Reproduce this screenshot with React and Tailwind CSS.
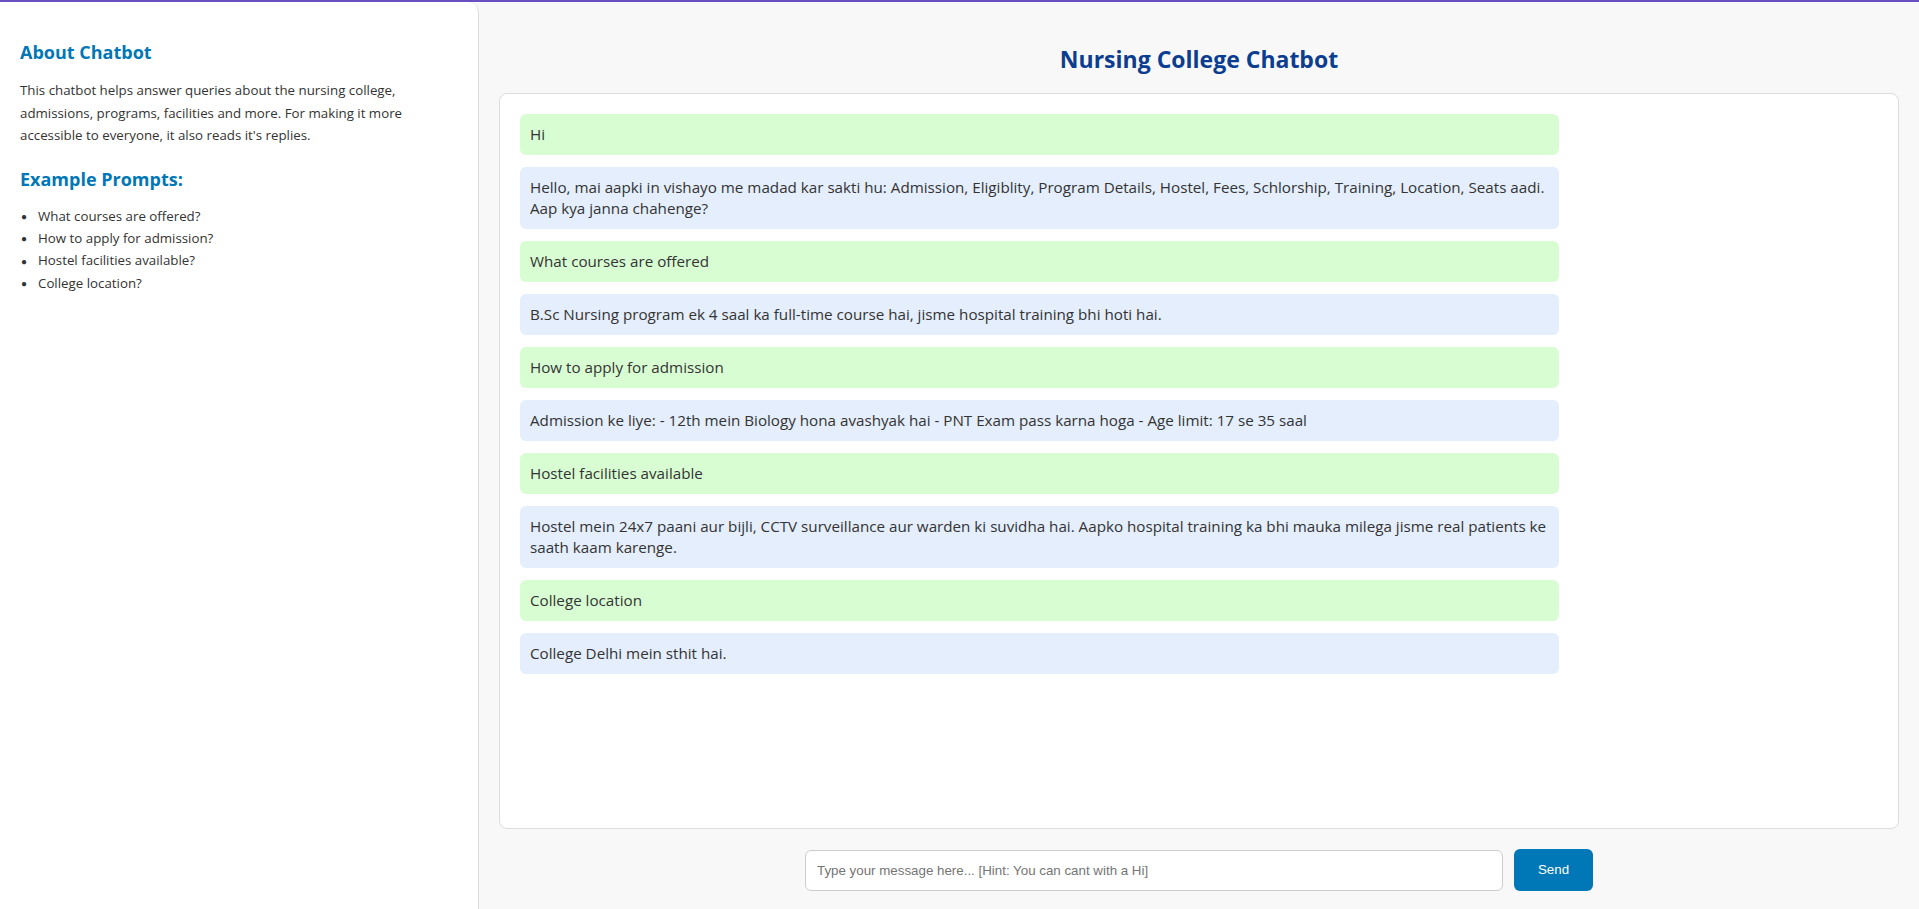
import React, { useState } from 'react';

const messages = [
  { from: 'user', lines: ['Hi'] },
  {
    from: 'bot',
    lines: [
      'Hello, mai aapki in vishayo me madad kar sakti hu: Admission, Eligiblity, Program Details, Hostel, Fees, Schlorship, Training, Location, Seats aadi.',
      'Aap kya janna chahenge?',
    ],
  },
  { from: 'user', lines: ['What courses are offered'] },
  { from: 'bot', lines: ['B.Sc Nursing program ek 4 saal ka full-time course hai, jisme hospital training bhi hoti hai.'] },
  { from: 'user', lines: ['How to apply for admission'] },
  { from: 'bot', lines: ['Admission ke liye: - 12th mein Biology hona avashyak hai - PNT Exam pass karna hoga - Age limit: 17 se 35 saal'] },
  { from: 'user', lines: ['Hostel facilities available'] },
  {
    from: 'bot',
    lines: [
      'Hostel mein 24x7 paani aur bijli, CCTV surveillance aur warden ki suvidha hai. Aapko hospital training ka bhi mauka milega jisme real patients ke',
      'saath kaam karenge.',
    ],
  },
  { from: 'user', lines: ['College location'] },
  { from: 'bot', lines: ['College Delhi mein sthit hai.'] },
];

const prompts = [
  'What courses are offered?',
  'How to apply for admission?',
  'Hostel facilities available?',
  'College location?',
];

function Sidebar() {
  return (
    <aside className="w-[479px] shrink-0 bg-white border-r border-[#dddddd] rounded-tr-[10px] px-5 pt-[37px]">
      <h3 className="text-[18px] leading-[27px] font-bold text-[#0077b6]">About Chatbot</h3>
      <p className="mt-[13px] text-[13.3px] leading-[22.6px] text-[#333333]">
        This chatbot helps answer queries about the nursing college,
        <br />
        admissions, programs, facilities and more. For making it more
        <br />
        accessible to everyone, it also reads it's replies.
      </p>
      <h3 className="mt-[19px] text-[18px] leading-[27px] font-bold text-[#0077b6]">Example Prompts:</h3>
      <ul className="mt-[12px] text-[13.3px] leading-[22.3px] text-[#333333]">
        {prompts.map((p) => (
          <li key={p} className="flex items-center">
            <span className="w-[18px] text-[10px] leading-none pl-[1px]">●</span>
            {p}
          </li>
        ))}
      </ul>
    </aside>
  );
}

function ChatBubble({ msg }) {
  return (
    <div
      className={
        'w-[1039px] rounded-[6px] px-[10px] py-[10px] text-[15.2px] leading-[21px] text-[#333333] whitespace-nowrap ' +
        (msg.from === 'user' ? 'bg-[#d9fdd3]' : 'bg-[#e4eefd]')
      }
    >
      {msg.lines.map((l, i) => (
        <div key={i}>{l}</div>
      ))}
    </div>
  );
}

export default function App() {
  const [text, setText] = useState('');

  return (
    <div
      className="w-full bg-[#f8f8f8]"
      style={{ fontFamily: '"Open Sans", "Noto Sans", sans-serif' }}
    >
      <div className="h-[2px] bg-[#6a4fc3]" />
      <div className="flex h-[907px]">
        <Sidebar />
        <main className="flex-1 flex flex-col px-5 pt-[42px] pb-[18px]">
          <h1 className="text-center text-[23px] leading-[30px] font-bold text-[#0b3d91]">
            Nursing College Chatbot
          </h1>
          <div className="mt-[19px] flex-1 bg-white border border-[#dddddd] rounded-[8px] p-5 flex flex-col gap-[12px] overflow-hidden">
            {messages.map((m, i) => (
              <ChatBubble key={i} msg={m} />
            ))}
          </div>
          <div className="mt-[20px] flex justify-center items-center gap-[11px]">
            <input
              value={text}
              onChange={(e) => setText(e.target.value)}
              placeholder="Type your message here... [Hint: You can cant with a Hi]"
              className="w-[698px] h-[41px] bg-white border border-[#cccccc] rounded-[6px] px-[11px] text-[13.33px] text-[#333333] placeholder:text-[#757575] outline-none"
              style={{ fontFamily: '"Liberation Sans", Arial, sans-serif' }}
            />
            <button
              className="w-[79px] h-[42px] bg-[#0077b6] text-white rounded-[6px] text-[13.33px]"
              style={{ fontFamily: '"Liberation Sans", Arial, sans-serif' }}
            >
              Send
            </button>
          </div>
        </main>
      </div>
    </div>
  );
}
